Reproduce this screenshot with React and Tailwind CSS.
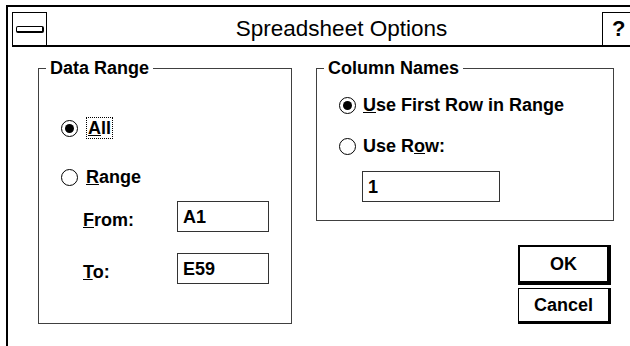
const Radio = ({ checked }) => (
  <span className="flex h-[17px] w-[17px] shrink-0 items-center justify-center rounded-full border-[1.5px] border-black">
    {checked && <span className="h-[9px] w-[9px] rounded-full bg-black" />}
  </span>
);

const Field = ({ value, width }) => (
  <div
    className={`flex h-[31px] items-center border border-[#333] pl-[5px] font-bold ${width}`}
  >
    {value}
  </div>
);

export default function App() {
  return (
    <div className="h-[346px] w-[630px] overflow-hidden bg-white font-['Liberation_Sans','Arial',sans-serif] text-[18px] leading-[20px] text-black">
      <div className="ml-[6px] mt-[5px] h-[341px] w-[640px] border-l-2 border-t-2 border-black pl-[4px] pt-[5px]">
        {/* title bar */}
        <div className="flex h-[35px] w-[625px] border-b-2 border-black">
          <div className="flex w-[35px] items-center justify-center border-l border-r border-t border-black">
            <div className="h-[7px] w-[28px] rounded-[2px] border border-b-2 border-r-2 border-black bg-white" />
          </div>
          <div className="flex flex-1 items-center justify-center pl-[34px] text-[22.5px]">
            Spreadsheet Options
          </div>
          <div className="flex w-[35px] items-center border-l border-t border-black pl-[9px] text-[22px] font-bold">
            ?
          </div>
        </div>

        {/* body */}
        <div className="flex pl-[26px] pt-[11px]">
          <fieldset className="h-[266px] w-[254px] border border-[#404040]">
            <legend className="ml-[7px] px-[4px] font-bold">Data Range</legend>
            <div className="pl-[22px]">
              <div className="mt-[40px] flex h-[20px] items-center gap-[8px]">
                <Radio checked />
                <span className="border border-dotted border-black px-[1px] font-bold">
                  <u>A</u>ll
                </span>
              </div>
              <div className="mt-[29px] flex h-[20px] items-center gap-[8px]">
                <Radio />
                <span className="font-bold">
                  <u>R</u>ange
                </span>
              </div>
              <div className="mt-[14px] flex items-center pl-[22px]">
                <span className="w-[94px] pt-[6px] font-bold">
                  <u>F</u>rom:
                </span>
                <Field value="A1" width="w-[92px]" />
              </div>
              <div className="mt-[21px] flex items-center pl-[22px]">
                <span className="w-[94px] pt-[6px] font-bold">
                  <u>T</u>o:
                </span>
                <Field value="E59" width="w-[92px]" />
              </div>
            </div>
          </fieldset>

          <div className="ml-[24px] flex w-[298px] flex-col">
            <fieldset className="h-[163px] w-[298px] border border-[#404040]">
              <legend className="ml-[7px] px-[4px] font-bold">Column Names</legend>
              <div className="pl-[22px]">
                <div className="mt-[17px] flex h-[20px] items-center gap-[7px]">
                  <Radio checked />
                  <span className="font-bold">
                    <u>U</u>se First Row in Range
                  </span>
                </div>
                <div className="mt-[21px] flex h-[20px] items-center gap-[7px]">
                  <Radio />
                  <span className="font-bold">
                    Use R<u>o</u>w:
                  </span>
                </div>
                <div className="ml-[23px] mt-[15px]">
                  <Field value="1" width="w-[138px]" />
                </div>
              </div>
            </fieldset>

            <div className="mr-[3px] mt-[24px] flex flex-col items-end">
              <button className="h-[40px] w-[93px] border-2 border-b-4 border-r-4 border-black bg-white font-bold">
                OK
              </button>
              <button className="mt-[3px] h-[36px] w-[93px] border border-b-[3px] border-r-[3px] border-black bg-white font-bold">
                Cancel
              </button>
            </div>
          </div>
        </div>
      </div>
    </div>
  );
}
